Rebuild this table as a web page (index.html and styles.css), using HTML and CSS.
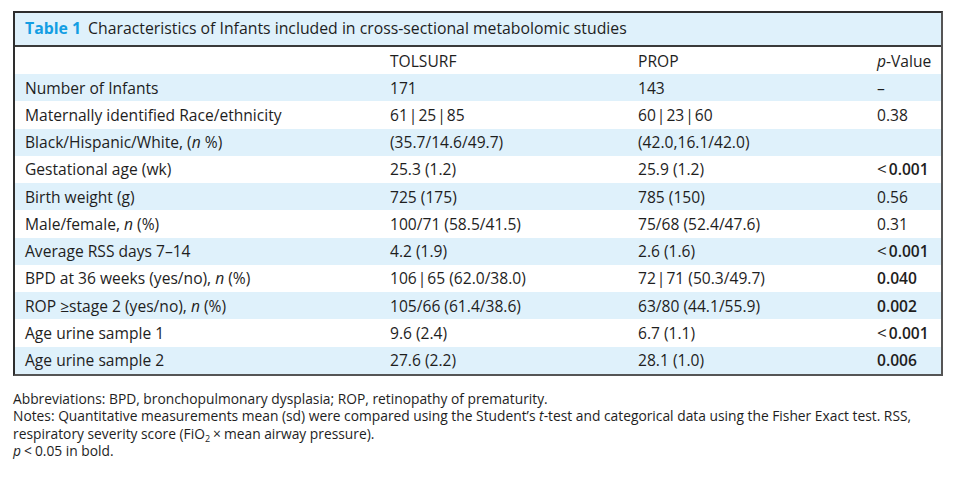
FILE: index.html
```html
<!DOCTYPE html>
<html lang="en">
<head>
<meta charset="utf-8">
<title>Table 1</title>
<link rel="stylesheet" href="styles.css">
</head>
<body>
<div class="page">
  <div class="table-box">
    <div class="caption"><span class="label">Table 1</span> Characteristics of Infants included in cross-sectional metabolomic studies</div>
    <table class="data">
      <colgroup>
        <col class="c1"><col class="c2"><col class="c3"><col class="c4">
      </colgroup>
      <thead>
        <tr class="head"><th></th><th>TOLSURF</th><th>PROP</th><th><i>p</i>-Value</th></tr>
      </thead>
      <tbody>
        <tr class="alt"><td>Number of Infants</td><td>171</td><td>143</td><td>–</td></tr>
        <tr><td>Maternally identified Race/ethnicity</td><td>61<span class="bar">|</span>25<span class="bar">|</span>85</td><td>60<span class="bar">|</span>23<span class="bar">|</span>60</td><td>0.38</td></tr>
        <tr class="alt"><td>Black/Hispanic/White, (<i>n</i> %)</td><td>(35.7/14.6/49.7)</td><td>(42.0,16.1/42.0)</td><td></td></tr>
        <tr><td>Gestational age (wk)</td><td>25.3 (1.2)</td><td>25.9 (1.2)</td><td><span class="lt">&lt;</span><b>0.001</b></td></tr>
        <tr class="alt"><td>Birth weight (g)</td><td>725 (175)</td><td>785 (150)</td><td>0.56</td></tr>
        <tr><td>Male/female, <i>n</i> (%)</td><td>100/71 (58.5/41.5)</td><td>75/68 (52.4/47.6)</td><td>0.31</td></tr>
        <tr class="alt"><td>Average RSS days 7–14</td><td>4.2 (1.9)</td><td>2.6 (1.6)</td><td><span class="lt">&lt;</span><b>0.001</b></td></tr>
        <tr><td>BPD at 36 weeks (yes/no), <i>n</i> (%)</td><td>106<span class="bar">|</span>65 (62.0/38.0)</td><td>72<span class="bar">|</span>71 (50.3/49.7)</td><td><b>0.040</b></td></tr>
        <tr class="alt"><td>ROP <span class="ge">≥</span>stage 2 (yes/no), <i>n</i> (%)</td><td>105/66 (61.4/38.6)</td><td>63/80 (44.1/55.9)</td><td><b>0.002</b></td></tr>
        <tr><td>Age urine sample 1</td><td>9.6 (2.4)</td><td>6.7 (1.1)</td><td><span class="lt">&lt;</span><b>0.001</b></td></tr>
        <tr class="alt"><td>Age urine sample 2</td><td>27.6 (2.2)</td><td>28.1 (1.0)</td><td><b>0.006</b></td></tr>
      </tbody>
    </table>
  </div>
  <div class="notes">
    <p>Abbreviations: BPD, bronchopulmonary dysplasia; ROP, retinopathy of prematurity.</p>
    <p>Notes: Quantitative measurements mean (sd) were compared using the Student’s <i>t</i>-test and categorical data using the Fisher Exact test. RSS,<br>respiratory severity score (FiO<sub>2</sub><span class="times">×</span>mean airway pressure).</p>
    <p><i>p</i><span class="lt small">&lt;</span>0.05 in bold.</p>
  </div>
</div>
</body>
</html>
```

FILE: styles.css
```css
html, body {
  margin: 0;
  padding: 0;
  background: #ffffff;
}

body {
  font-family: "Open Sans", "Noto Sans", sans-serif;
  color: #1e1e1e;
}

.page {
  padding: 11px 17px 0 13px;
}

.table-box {
  width: 926px;
  border: 2px solid #2e2e2e;
  border-right-color: #555;
  border-bottom-color: #555;
}

.caption {
  background: #dff1fb;
  height: 34px;
  box-sizing: border-box;
  padding: 2px 10px 0 10px;
  font-size: 15.8px;
  line-height: 26px;
  border-bottom: 2px solid #3a3a3a;
}

.caption .label {
  color: #139ee3;
  font-weight: bold;
  margin-right: 3px;
}

.data {
  width: 100%;
  border-collapse: collapse;
  table-layout: fixed;
  font-size: 15.6px;
}

.c1 { width: 365px; }
.c2 { width: 248px; }
.c3 { width: 239px; }
.c4 { width: 74px; }

.data th,
.data td {
  text-align: left;
  font-weight: normal;
  padding: 0 0 0 10px;
  height: 27.27px;
  line-height: 20px;
  white-space: nowrap;
}

.data .head th {
  height: 27px;
}

.data tr.alt td {
  background: #dff1fb;
}

.data b {
  font-weight: 600;
}

.bar {
  margin: 0 1px;
}

.lt {
  display: inline-block;
  font-weight: normal;
  font-size: 17px;
  line-height: 16px;
  margin-right: 2px;
}

.lt.small {
  font-size: inherit;
  margin: 0 3px;
}

.times {
  margin: 0 3px;
}

.notes {
  margin-top: 14px;
  font-size: 13.8px;
  line-height: 17.3px;
}

.notes p {
  margin: 0;
}

.notes sub {
  font-size: 9px;
  line-height: 0;
  vertical-align: -3px;
}
```
